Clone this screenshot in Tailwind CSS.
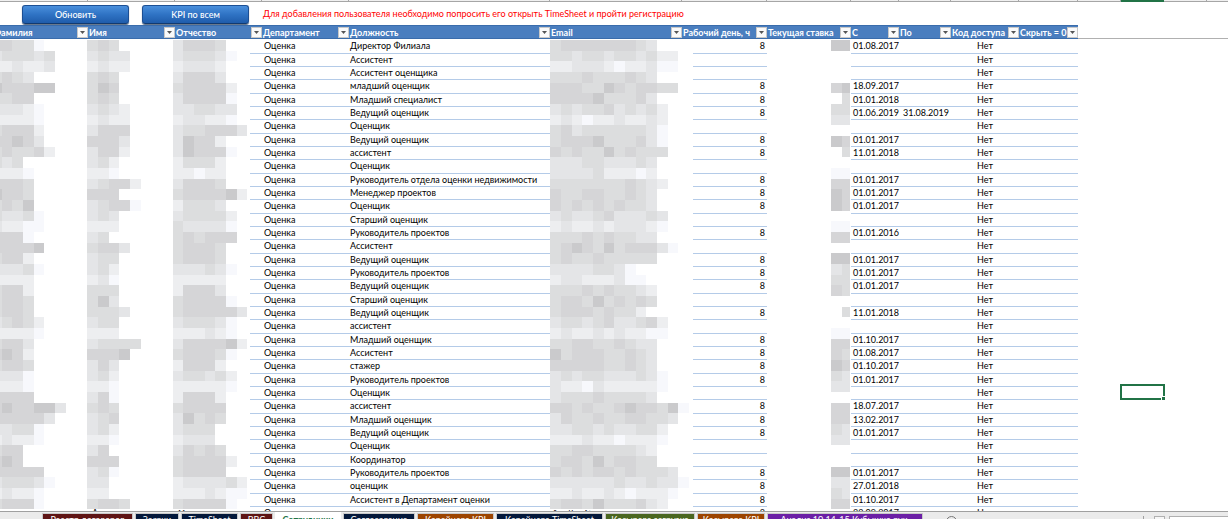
<!DOCTYPE html>
<html lang="ru">
<head>
<meta charset="utf-8">
<title>Сотрудники</title>
<script src="https://cdn.jsdelivr.net/npm/@tailwindcss/browser@4"></script>
</head>
<body class="h-screen overflow-hidden bg-white font-[Lato,'Open_Sans',sans-serif] text-[9px] leading-[12px] text-black">
<div class="flex h-full flex-col">

  <!-- column letters strip -->
  <div id="strip" class="flex h-[2px] shrink-0 border-b border-[#a6a6a6] bg-[#f0f0f0]"></div>

  <!-- toolbar -->
  <header class="flex h-[23px] shrink-0 items-start gap-[13px] pt-[3px] pl-[22px]">
    <button class="h-[19px] w-[107px] rounded-[3px] border border-[#1c4f94] border-b-[#123a70] bg-linear-to-b from-[#4a8fdc] via-[#2f73c4] to-[#1f5cab] pt-px font-medium text-white shadow-[0_1px_1px_#5a6b80]">Обновить</button>
    <button class="h-[19px] w-[107px] rounded-[3px] border border-[#1c4f94] border-b-[#123a70] bg-linear-to-b from-[#4a8fdc] via-[#2f73c4] to-[#1f5cab] pt-px font-medium text-white shadow-[0_1px_1px_#5a6b80]">KPI по всем</button>
    <p class="pt-[3px] pl-px whitespace-nowrap text-[#ff0000]">Для добавления пользователя необходимо попросить его открыть TimeSheet и пройти регистрацию</p>
  </header>

  <!-- sheet -->
  <main class="relative min-h-0 flex-1 overflow-hidden">
    <div class="absolute top-[13px] right-0 left-0 h-px bg-[#b0b0b0]"></div>
    <table class="relative w-[1078px] table-fixed border-collapse whitespace-nowrap">
      <colgroup id="cols"></colgroup>
      <thead><tr id="head" class="h-[14px] bg-[#4a7ebf] text-left text-white"></tr></thead>
      <tbody id="rows"></tbody>
    </table>
    <svg id="mosaic" class="absolute top-[15px] left-0" width="1078" height="470" shape-rendering="crispEdges" aria-hidden="true"></svg>
    <!-- selected cell -->
    <div class="absolute top-[359px] left-[1120px] h-[16px] w-[45px] border-2 border-[#217346]">
      <span class="absolute -right-[3px] -bottom-[3px] size-[5px] border border-white bg-[#217346]"></span>
    </div>
  </main>

  <!-- sheet tabs -->
  <nav class="flex h-[8px] shrink-0 items-start overflow-hidden border-t border-[#a0a0a0] bg-[#ebebeb] pl-[42px] leading-[12px] whitespace-nowrap text-white">
    <div id="tabs" class="flex"></div>
    <button aria-label="Новый лист" class="mt-[3px] ml-[20px]"><svg class="block" width="13" height="13" viewBox="0 0 13 13" fill="none" stroke="#777"><circle cx="6.500" cy="6.500" r="5"/><path d="M6.500 4v5M4 6.500h5"/></svg></button>
    <div class="ml-auto flex items-start">
      <span class="mt-[4px] mr-[10px] h-[8px] w-px bg-[#a0a0a0]"></span>
      <button aria-label="Прокрутить влево" class="mt-[4px] mr-[4px] h-[12px] w-[11px] border border-[#b0b0b0] bg-[#f6f6f6]"></button>
      <span class="mt-[4px] h-[12px] w-[59px] border border-r-0 border-[#b0b0b0] bg-white"></span>
    </div>
  </nav>
</div>

<script>
const columns = [
  ['Фамилия', 88], ['Имя', 87], ['Отчество', 87], ['Департамент', 87], ['Должность', 201], ['Email', 132],
  ['Рабочий день, ч', 85], ['Текущая ставка', 84], ['С', 48], ['По', 52], ['Код доступа', 68], ['Скрыть = 0', 59]
];
document.getElementById('cols').innerHTML = columns.map(c => `<col style="width:${c[1]}px">`).join('');
document.getElementById('strip').innerHTML = columns.map(c => `<span class="shrink-0 border-r border-[#a6a6a6]" style="width:${c[1]}px"></span>`).join('')
  + '<span class="w-[43px] border-r border-[#a6a6a6]"></span><span class="h-[2px] w-[43px] bg-[#217346]"></span><span class="w-[43px] border-r border-[#a6a6a6]"></span>';
document.getElementById('head').innerHTML = columns.map((c, i) => `<th class="overflow-hidden p-0 font-bold"><div class="flex h-[14px] items-center justify-between border-y border-y-[#3a6cab] ${i ? 'pl-px' : ''}"><span class="pt-px ${i ? '' : '-ml-[6px]'}">${c[0]}</span><button aria-label="Фильтр: ${c[0]}" class="flex size-[11px] shrink-0 items-center justify-center border border-[#c8c8c8] bg-[#fafafa]"><svg width="5" height="3" viewBox="0 0 5 3"><path d="M0 0h5L2.500 3z" fill="#555"/></svg></button></div></th>`).join('');

const people = [
  ['Директор Филиала', '01.08.2017'], ['Ассистент'], ['Ассистент оценщика'], ['младший оценщик', '18.09.2017'],
  ['Младший специалист', '01.01.2018'], ['Ведущий оценщик', '01.06.2019', '31.08.2019'], ['Оценщик'],
  ['Ведущий оценщик', '01.01.2017'], ['ассистент', '11.01.2018'], ['Оценщик'],
  ['Руководитель отдела оценки недвижимости', '01.01.2017'], ['Менеджер проектов', '01.01.2017'], ['Оценщик', '01.01.2017'],
  ['Старший оценщик'], ['Руководитель проектов', '01.01.2016'], ['Ассистент'], ['Ведущий оценщик', '01.01.2017'],
  ['Руководитель проектов', '01.01.2017'], ['Ведущий оценщик', '01.01.2017'], ['Старший оценщик'],
  ['Ведущий оценщик', '11.01.2018'], ['ассистент'], ['Младший оценщик', '01.10.2017'], ['Ассистент', '01.08.2017'],
  ['стажер', '01.10.2017'], ['Руководитель проектов', '01.01.2017'], ['Оценщик'], ['ассистент', '18.07.2017'],
  ['Младший оценщик', '13.02.2017'], ['Ведущий оценщик', '01.01.2017'], ['Оценщик'], ['Координатор'],
  ['Руководитель проектов', '01.01.2017'], ['оценщик', '27.01.2018'], ['Ассистент в Департамент оценки', '01.10.2017'],
  ['', '22.09.2017', '', 'А', 'О', 'AnotherCompany']
];
const line = 'border-b border-[#b4cbe8] ';
document.getElementById('rows').innerHTML = people.map(p => `<tr class="h-[13px] leading-[12px] nth-[3n+1]:h-[14px]">
<td class="p-0 pl-[2px]"></td><td class="p-0 pl-[4px]">${p[3] || ''}</td><td class="${line}p-0 pl-[3px]">${p[4] || ''}</td>
<td class="${line}p-0 pl-[2px]">Оценка</td><td class="${line}p-0 pl-px">${p[0]}</td><td class="${line}p-0 pl-[2px]">${p[5] || ''}</td>
<td class="${line}p-0 pr-[2px] text-right">${p[1] ? 8 : ''}</td><td class="p-0"></td>
<td class="${line}p-0 pl-[2px]">${p[1] || ''}</td><td class="${line}p-0 pr-[2px] text-right">${p[2] || ''}</td>
<td class="${line}p-0 text-center">Нет</td><td class="${line}p-0"></td></tr>`).join('');

// censored columns: one letter per block, a = lightest, f = darkest
const shades = { a: '#f7f8fc', b: '#edeef0', c: '#e4e5e7', d: '#dcddde', e: '#d5d5d7', f: '#cacacc' };
const blocks = [
  { x: -9, cover: 0, rows: 'eedda cdddcd bbcbbc dedc feeeff ddee cccba bbbba deeeb eefec deddeb dcd bbba eeed feed dedf dccda cbbaa eeea eeeef deeb cccda bbbb deeb deed deed cdedb bbbba deec efeb deed ccca bbba eeee efeeffc eeeeec ccdda bcbba dee efe eeeee cdddca bcbba deeea' },
  { x: 87.3, cover: 0, rows: 'ded cdcc bcbb ded dfe ded cdcb bcbb ceee eeec ceeb cdb bba cdeeb eee cdeea cdc bbb cd deec cdd cdb bca ddd dfc dddc cdd bbb cdddd eeef cec cdb bba cea ded cde cdb bba ce eee cda cc bb deed' },
  { x: 172.7, cover: 77, rows: 'ceeed cdddca bcccb ceeec deeeeb ceeeea ccddcc bccbba cddeeec cfeeb cfeeea bdddb bbabb ceeed deeeefb bdddc cddddb dcccca dedeee deeed deeed cccdca bbbbb beeec deeeea deeeeec cdddca bbbcba ceeeefb deeeda beeeb cddcdb bbbbba beeeb deeee cfded cddd bccc ceded deeeeb deeee bccccdb bbbcbaa deeeea' },
  { x: 550.3, cover: 143, rows: 'deeeeeeedc ddcddcddcdbb bbcccbabbcaa dddedddedc eeeddfedeedd eeeefdddec cdcddecdcdb bcbabbcbbcb decddddddca deeefdddeca ededdfdeddd cccddcccdc ccccdbbbab dddddddedcb eddeeddedc ededededdc cdccdecccdc bcbbcbcccba dddededdcc defedfdeeeca deddeddddd ccccddca bccbbbcaa dddededdcb deedfdeded deeededdb cddcdeccdeb bcbbcbcbbaa ddeeddedcc fdeeeddedc eeeeeddedc cdcddcccdca cbbacbbbbba cdddeddddc eededdefeedfa ceddeddeeddc ccddcdccddb bbbcbbabbba ddeeddddcb deedfdeedd ededeededddc ccccccdccdcca bbcbbcbabbba deedfdddecb' },
  { x: 831, cover: 0, rows: 'ff . . . ef .d dd cc . fe .d . aa ee fe fe . aa ee . ff cd dd ed . .d . aa ee ed fe dc cc . ee ee dc cc . . ff cc dc ee' }
];
const step = 32 / 3;
document.getElementById('mosaic').innerHTML = blocks.map(b =>
  (b.cover ? `<rect x="${b.x}" y="0" width="${b.cover}" height="470" fill="#fff"/>` : '') +
  b.rows.split(' ').map((r, j) => [...r].map((ch, i) => shades[ch]
    ? `<rect x="${b.x + i * step}" y="${j * step}" width="${b.x === 831 && i ? 8.5 : step}" height="${step}" fill="${shades[ch]}"/>` : '').join('')).join('')
).join('');

const tabs = [
  ['Реестр договоров', 91, 'bg-[#5e1414]'], ['Заявки', 44, 'bg-[#04183a]'], ['TimeSheet', 57, 'bg-[#04183a]'], ['ВВС', 33, 'bg-[#5e1414]'],
  ['Сотрудники', 66, 'bg-white font-bold text-[#217346]'], ['Согласование', 72, 'bg-[#04183a]'], ['Корейцева KPI', 77, 'bg-[#9c4400]'],
  ['Корейцева TimeSheet', 107, 'bg-[#04183a]'], ['Косырева загрузка', 90, 'bg-[#4a6620]'], ['Косырева KPI', 68, 'bg-[#9c4400]'], ['Анализ 10.14-15 Кубышко рук.', 156, 'bg-[#6b1fa5]']
];
document.getElementById('tabs').innerHTML = tabs.map((t, i) => `<a href="#" class="mr-[2px] block h-[16px] overflow-hidden text-center ${i === 4 ? 'pt-[2px]' : 'mt-px border border-[#c8c8c8]'} ${t[2]}" style="width:${t[1]}px">${t[0]}</a>`).join('');
</script>
</body>
</html>
